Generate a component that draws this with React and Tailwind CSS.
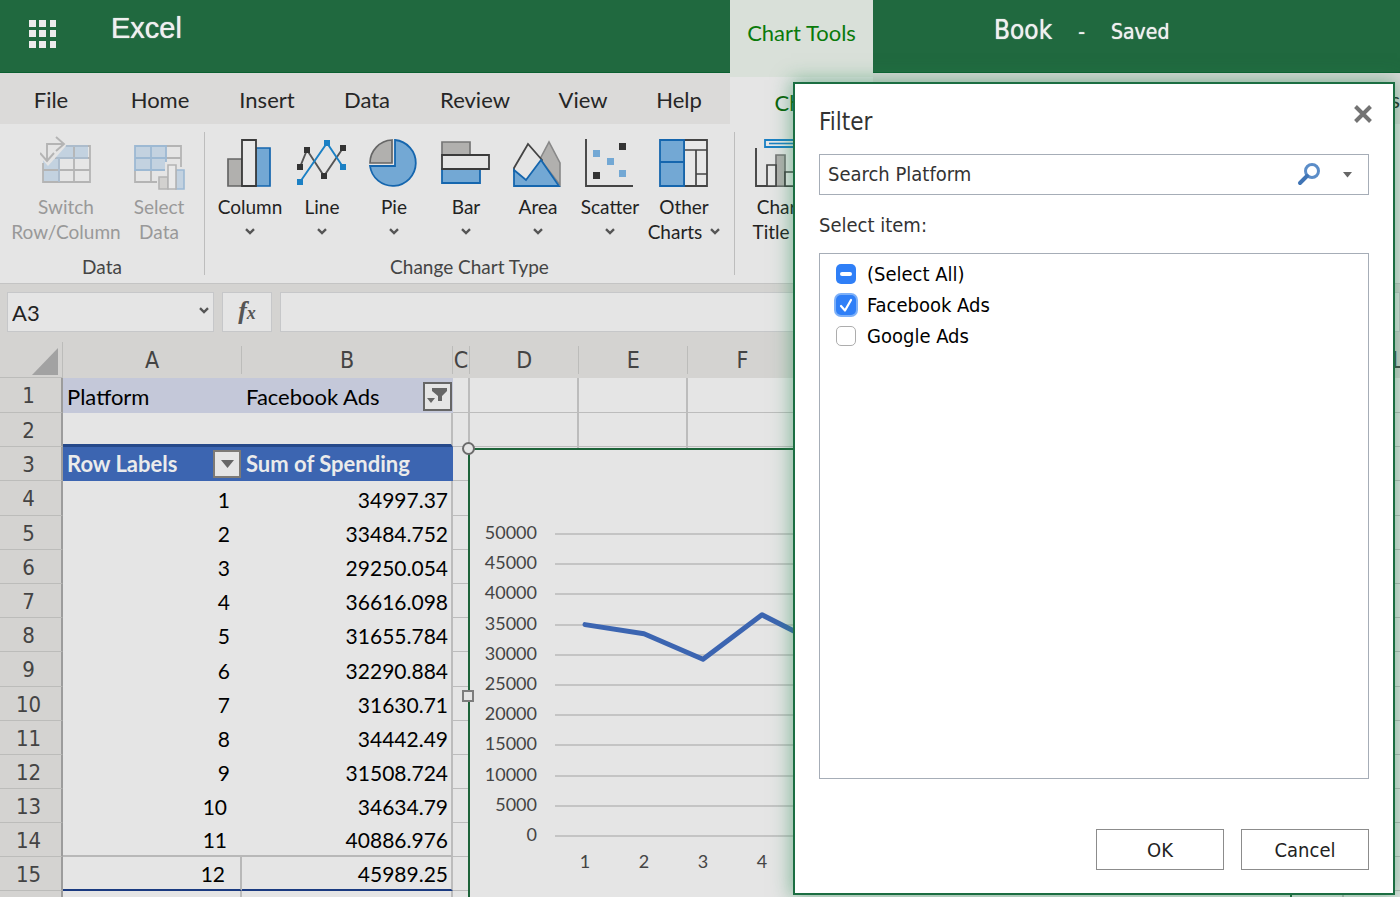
import React, { useEffect, useRef, useState } from "react";

const rows = [
  [1, 34997.37],
  [2, 33484.752],
  [3, 29250.054],
  [4, 36616.098],
  [5, 31655.784],
  [6, 32290.884],
  [7, 31630.71],
  [8, 34442.49],
  [9, 31508.724],
  [10, 34634.79],
  [11, 40886.976],
  [12, 45989.25],
];

const otherColumns = ["D", "E", "F", "G", "H", "I", "J", "K", "L"];

function Chevron({ className = "" }) {
  return (
    <svg className={className} width="10" height="7" viewBox="0 0 10 7" aria-hidden="true">
      <path d="M1 1.2 5 5 9 1.2" fill="none" stroke="#555" strokeWidth="2.4" />
    </svg>
  );
}

function Icon({ children }) {
  return (
    <svg width="52" height="54" viewBox="0 0 52 54" fill="none" className="shrink-0" aria-hidden="true">
      {children}
    </svg>
  );
}

const SwitchIcon = () => (
  <Icon>
    <path d="M21 10H48V22H9Z" fill="#c3d2e0" />
    <path d="M3 22H19V46H3Z" fill="#c3d2e0" />
    <path d="M19 22H50V46H19Z" fill="#e6e6e6" />
    <path d="M24 10H50V46H3V27M15 22H50M3 34H50M19 22V46M34 10V46" stroke="#b4b4b4" strokeWidth="1.8" />
    <path d="M22 10H48M16 22H48M19 22V46" stroke="#a9bfd3" strokeWidth="1.5" />
    <path d="M1 22 24 2 26 10 8 30Z" fill="#e5e5e5" />
    <path d="M7 24V8H23M16 1 24 8 16 15M0 17 7 25 14 17" stroke="#b4b4b4" strokeWidth="1.9" />
  </Icon>
);

const SelectIcon = () => (
  <Icon>
    <path d="M2 10H33V34H2Z" fill="#c3d2e0" />
    <path d="M33 10H48V46H2V34M33 22H48M2 34H28M18 34V46" stroke="#b4b4b4" strokeWidth="1.8" />
    <path d="M2 34V10H33V34ZM2 22H33M18 10V34" stroke="#9db9d3" strokeWidth="1.8" />
    <path d="M24 38H32V26H46V31H52V54H24Z" fill="#e5e5e5" />
    <path d="M26 41H35V53H26Z" fill="#d2d1cf" stroke="#b4b4b4" strokeWidth="1.6" />
    <path d="M43 34H51V53H43Z" fill="#c3d2e0" stroke="#9db9d3" strokeWidth="1.6" />
    <path d="M35 29H43V53H35Z" fill="#e9e9e9" stroke="#b4b4b4" strokeWidth="1.6" />
  </Icon>
);

const ColumnIcon = () => (
  <Icon>
    <path d="M4 23H18V50H4Z" fill="#b1b0ae" stroke="#666" strokeWidth="1.7" />
    <path d="M32 12H46V50H32Z" fill="#73a8d4" stroke="#1566ae" strokeWidth="1.7" />
    <path d="M18 4H32V50H18Z" fill="#e8e8e8" stroke="#3b3b3b" strokeWidth="1.8" />
  </Icon>
);

const LineIcon = () => (
  <Icon>
    <path d="M4 31 11 14 28 40 47 12" stroke="#555" strokeWidth="1.9" />
    <path d="M4 46 31 7 47 31" stroke="#1b80c4" strokeWidth="1.9" />
    <path d="M1 28h6v6h-6zM8 11h6v6h-6zM25 37h6v6h-6zM44 9h6v6h-6z" fill="#333" />
    <path d="M1 43h6v6h-6zM28 4h6v6h-6zM44 28h6v6h-6z" fill="#1b80c4" />
  </Icon>
);

const PieIcon = () => (
  <Icon>
    <path d="M24 27H2A23 23 0 0 1 24 4Z" fill="#b1b0ae" stroke="#666" strokeWidth="1.7" />
    <path d="M27 4A23 23 0 1 1 2 30H27Z" fill="#73a8d4" stroke="#1566ae" strokeWidth="1.8" />
  </Icon>
);

const BarIcon = () => (
  <Icon>
    <path d="M2 6H30V20H2Z" fill="#b1b0ae" stroke="#777" strokeWidth="1.7" />
    <path d="M2 33H40V47H2Z" fill="#73a8d4" stroke="#1566ae" strokeWidth="1.8" />
    <path d="M2 19H49V33H2Z" fill="#e5e5e5" stroke="#3b3b3b" strokeWidth="1.8" />
  </Icon>
);

const AreaIcon = () => (
  <Icon>
    <path d="M28 23 37 6 48 27V49Z" fill="#b1b0ae" stroke="#888" strokeWidth="1.6" />
    <path d="M2 32 16 8 30 24 14 45 2 35Z" fill="#e5e5e5" stroke="#444" strokeWidth="1.8" />
    <path d="M2 34 14 44 29 24 47 50H2Z" fill="#73a8d4" stroke="#1566ae" strokeWidth="1.8" />
  </Icon>
);

const ScatterIcon = () => (
  <Icon>
    <path d="M2 3V50H49" stroke="#444" strokeWidth="1.9" />
    <path d="M35 7h7v7h-7zM9 36h7v7h-7z" fill="#333" />
    <path d="M9 14h7v7h-7zM23 22h7v7h-7zM35 34h7v7h-7z" fill="#73a8d4" />
  </Icon>
);

const OtherIcon = () => (
  <Icon>
    <path d="M26 4H49V50H26Z" fill="#e8e8e8" stroke="#444" strokeWidth="1.8" />
    <path d="M26 14H49M38 14V50M38 38H49" stroke="#444" strokeWidth="1.7" />
    <path d="M2 4H26V50H2ZM2 26H26" fill="#73a8d4" stroke="#1566ae" strokeWidth="1.8" />
  </Icon>
);

const TitleIcon = () => (
  <Icon>
    <path d="M11 4H49V11H11Z" fill="#e8e8e8" stroke="#1b80c4" strokeWidth="1.8" />
    <path d="M15 7.5H45" stroke="#1b80c4" strokeWidth="1.6" />
    <path d="M2 12V50H49" stroke="#444" strokeWidth="1.9" />
    <path d="M22 19H31V50H22Z" fill="#b1b0ae" stroke="#777" strokeWidth="1.7" />
    <path d="M13 29H22V50H13ZM31 36H40V50H31Z" fill="#e8e8e8" stroke="#444" strokeWidth="1.7" />
  </Icon>
);

const chartTypes = [
  ["Column", ColumnIcon],
  ["Line", LineIcon],
  ["Pie", PieIcon],
  ["Bar", BarIcon],
  ["Area", AreaIcon],
  ["Scatter", ScatterIcon],
];

function Header() {
  return (
    <header className="relative z-10 flex h-[73px] shrink-0 items-start border-b border-[#0b5f31] bg-[#20693f] text-[#f0f0f0]">
      <div className="flex flex-1 basis-0 items-start">
        <button className="mt-5 ml-7 size-7" aria-label="App launcher">
          <svg width="28" height="28" viewBox="0 0 28 28" fill="#ececec">
            {[0, 10, 21].map((y) => [0, 10, 21].map((x) => <rect key={`${x}-${y}`} x={x + 1} y={y} width="7" height="7" />))}
          </svg>
        </button>
        <span className="mt-2 ml-[55px] font-['Liberation_Sans',sans-serif] text-[29px] leading-10 [text-shadow:0_0_1px_#f0f0f0]">Excel</span>
      </div>
      <div className="h-[77px] w-[143px] bg-[#d9e0d9] pt-[19px] text-center text-[22px] leading-7 text-[#0a7a0a]">Chart Tools</div>
      <div className="flex w-[527px] items-baseline pt-3 pl-[121px] font-['DejaVu_Sans_Condensed','DejaVu_Sans',sans-serif] leading-9 [text-shadow:0_0_1px_#f0f0f0]">
        <span className="text-[26px]">Book</span>
        <span className="ml-[26px] text-[21px]">-</span>
        <span className="ml-[26px] text-[21px]">Saved</span>
      </div>
    </header>
  );
}

function Tabs() {
  const tab = "text-center text-[22px] leading-7 text-[#262626]";
  return (
    <nav className="flex h-[51px] shrink-0 items-center bg-[#dbdad9] pt-0.5">
      <button className={`${tab} w-[102px]`}>File</button>
      <button className={`${tab} w-[116px]`}>Home</button>
      <button className={`${tab} w-[98px]`}>Insert</button>
      <button className={`${tab} w-[102px]`}>Data</button>
      <button className={`${tab} w-[114px]`}>Review</button>
      <button className={`${tab} w-[102px]`}>View</button>
      <button className={`${tab} mr-1.5 w-[90px]`}>Help</button>
      <button className="h-full w-[143px] bg-[#e5e5e5] pt-1.5 text-[22px] leading-7 text-[#0a640a]">Chart</button>
      <button className={`${tab} ml-auto`}>Comments</button>
    </nav>
  );
}

function Ribbon() {
  const item = "flex flex-col items-center text-[19px] leading-[25px]";
  return (
    <div className="flex h-[160px] shrink-0 border-b border-[#c4c4c4] bg-[#e5e5e5] pt-2 text-[#222]">
      <section className="flex h-[143px] w-[205px] shrink-0 flex-col justify-between border-r border-[#bdbdbd]">
        <div className="flex pt-1 text-[#999]">
          <button className={`${item} w-[132px]`} disabled>
            <SwitchIcon />
            <span className="pt-1">Switch</span>
            <span>Row/Column</span>
          </button>
          <button className={`${item} w-[54px]`} disabled>
            <SelectIcon />
            <span className="pt-1">Select</span>
            <span>Data</span>
          </button>
        </div>
        <h2 className="text-center text-[19px] leading-4 text-[#444]">Data</h2>
      </section>
      <section className="flex h-[143px] w-[530px] shrink-0 flex-col justify-between border-r border-[#bdbdbd]">
        <div className="flex pt-1 pl-[9px]">
          {chartTypes.map(([name, Glyph]) => (
            <button key={name} className={`${item} w-[72px]`}>
              <Glyph />
              <span className="pt-1">{name}</span>
              <span className="flex h-[25px] items-center">
                <Chevron />
              </span>
            </button>
          ))}
          <button className={`${item} w-[76px]`}>
            <OtherIcon />
            <span className="pt-1">Other</span>
            <span className="flex items-center gap-2">
              Charts <Chevron />
            </span>
          </button>
        </div>
        <h2 className="text-center text-[19px] leading-4 text-[#444]">Change Chart Type</h2>
      </section>
      <section className="flex h-[143px] flex-col">
        <div className="flex pt-1">
          <button className={`${item} w-[90px]`}>
            <TitleIcon />
            <span className="pt-1">Chart</span>
            <span className="flex items-center gap-2">
              Title <Chevron />
            </span>
          </button>
        </div>
      </section>
    </div>
  );
}

function FormulaBar() {
  return (
    <div className="flex h-[58px] shrink-0 gap-2 bg-[#d4d3d1] pt-2 pl-[7px]">
      <div className="flex h-10 w-[207px] items-center border border-[#c6c7c9] bg-[#e5e5e5] pr-1">
        <input
          aria-label="Name box"
          defaultValue="A3"
          className="w-full min-w-0 bg-transparent px-1 font-['Lato',sans-serif] text-[22px] text-[#222] outline-none"
        />
        <Chevron className="mb-1 shrink-0" />
      </div>
      <button aria-label="Insert function" className="h-10 w-[50px] border border-[#c6c7c9] bg-[#e5e5e5] font-['Liberation_Serif',serif] text-[26px] leading-8 font-bold text-[#555] italic">
        f<span className="text-[18px]">x</span>
      </button>
      <input aria-label="Formula" className="h-10 min-w-0 flex-1 border border-[#c6c7c9] bg-[#e5e5e5] px-2 text-[22px] outline-none" />
    </div>
  );
}

function ColHead({ children }) {
  return (
    <th className="p-0 align-top font-normal">
      <div className="mt-1 flex h-7 items-center justify-center border-r border-[#bcbcba]">{children}</div>
    </th>
  );
}

function OtherCells() {
  const cell = "border-r-2 border-b border-[#bcbcbc] p-0";
  return (
    <>
      <td className={cell} />
      {otherColumns.map((c) => (
        <td key={c} className={cell} />
      ))}
    </>
  );
}

function RowHead({ children }) {
  return (
    <th
      scope="row"
      className="border-r-2 border-b border-r-[#9c9c9c] border-b-[#bcbcba] bg-[#d4d3d1] p-0 pt-0.5 pr-1 font-['DejaVu_Sans_Condensed','DejaVu_Sans',sans-serif] text-[22px] leading-7 font-normal text-[#444]"
    >
      {children}
    </th>
  );
}

function Sheet() {
  const text = "p-0 pt-0.5 pl-1 text-left text-[22px] leading-7 text-black";
  const head = "bg-[#3c65b1] p-0 pl-1 text-left text-[22px] leading-7 font-bold text-[#ebebeb]";
  const number = "p-0 pt-0.5 text-right text-[21px] leading-7 text-black";
  return (
    <table className="w-[1453px] table-fixed border-separate border-spacing-0">
      <colgroup>
        <col className="w-[63px]" />
        <col className="w-[179px]" />
        <col className="w-[211px]" />
        <col className="w-[17px]" />
        {otherColumns.map((c) => (
          <col key={c} />
        ))}
      </colgroup>
      <thead>
        <tr className="h-[36px] bg-[#d4d3d1] font-['DejaVu_Sans_Condensed','DejaVu_Sans',sans-serif] text-[23px] leading-7 text-[#444]">
          <th className="border-r border-b border-[#bcbcba] p-0">
            <button className="flex w-full justify-end pt-1 pr-1" aria-label="Select all cells">
              <svg width="26" height="27" viewBox="0 0 26 27">
                <path d="M26 0V27H0Z" fill="#a2a2a2" />
              </svg>
            </button>
          </th>
          <ColHead>A</ColHead>
          <ColHead>B</ColHead>
          <ColHead>C</ColHead>
          {otherColumns.map((c) => (
            <ColHead key={c}>{c}</ColHead>
          ))}
        </tr>
      </thead>
      <tbody>
        <tr className="h-[35px]">
          <RowHead>1</RowHead>
          <td className={`${text} bg-[#c4c8d9]`}>Platform</td>
          <td className={`${text} bg-[#c4c8d9]`}>
            <div className="flex items-center justify-between">
              Facebook Ads
              <button aria-label="Filter Platform" className="mr-px flex size-[29px] items-center justify-center border-2 border-[#666] bg-[#e5e5e5]">
                <svg width="21" height="19" viewBox="0 0 21 19" fill="#666">
                  <path d="M5 1H20V4L15 9V14H11V9L5 4ZM0 11H8L4 16Z" />
                </svg>
              </button>
            </div>
          </td>
          <OtherCells />
        </tr>
        <tr className="h-[34px]">
          <RowHead>2</RowHead>
          <td className="border-b-3 border-[#26498a] p-0" />
          <td className="border-r-2 border-b-3 border-r-[#bcbcbc] border-b-[#26498a] p-0" />
          <OtherCells />
        </tr>
        <tr className="h-[34px]">
          <RowHead>3</RowHead>
          <td className={head}>
            <div className="flex items-center justify-between">
              Row Labels
              <button aria-label="Filter row labels" className="mr-px flex size-[28px] items-center justify-center border-2 border-[#7d7a76] bg-[#e5e5e5]">
                <svg width="13" height="8" viewBox="0 0 13 8" fill="#666">
                  <path d="M0 0H13L6.5 8Z" />
                </svg>
              </button>
            </div>
          </td>
          <td className={head}>Sum of Spending</td>
          <OtherCells />
        </tr>
        {rows.map(([month, value]) => (
          <tr key={month} className={month % 5 === 1 && month < 11 ? "h-[35px]" : "h-[34px]"}>
            <RowHead>{month + 3}</RowHead>
            <td
              className={`${number} ${month > 9 ? "pr-[15px]" : "pr-3"} ${
                month === 11 ? "border-b-2 border-[#b8b8b8]" : month === 12 ? "border-r-2 border-b-2 border-r-[#b8b8b8] border-b-[#1a3a80]" : ""
              }`}
            >
              {month}
            </td>
            <td
              className={`${number} border-r-2 border-r-[#bcbcbc] pr-[3px] ${
                month === 11 ? "border-b-2 border-b-[#b8b8b8]" : month === 12 ? "border-b-2 border-b-[#1a3a80]" : ""
              }`}
            >
              {value}
            </td>
            <OtherCells />
          </tr>
        ))}
        <tr className="h-[34px]">
          <RowHead />
          <td className="border-r-2 border-[#bcbcbc] p-0" />
          <td className="border-r-2 border-[#bcbcbc] p-0" />
          <OtherCells />
        </tr>
      </tbody>
    </table>
  );
}

function SpendingChart() {
  const base = 386;
  const yOf = (v) => base - (v / 50000) * 302;
  const xOf = (i) => 115 + i * 59;
  const ticks = Array.from({ length: 11 }, (_, i) => i * 5000);
  return (
    <figure className="absolute top-[106px] left-[468px] h-[520px] w-[824px] border-2 border-[#1d6339] bg-[#e5e5e5]" aria-label="Sum of Spending by month">
      <svg width="820" height="516" viewBox="0 0 820 516" className="font-['Lato',sans-serif] text-[18px]" fill="#444">
        {ticks.map((t) => (
          <g key={t}>
            <path d={`M85 ${Math.round(yOf(t))}H790`} stroke="#b9b9b9" strokeWidth="1.5" />
            <text x="67" y={Math.round(yOf(t)) + 5} textAnchor="end">
              {t}
            </text>
          </g>
        ))}
        {rows.map(([m], i) => (
          <text key={m} x={xOf(i)} y="418" textAnchor="middle">
            {m}
          </text>
        ))}
        <polyline points={rows.map(([, v], i) => `${xOf(i)},${yOf(v)}`).join(" ")} fill="none" stroke="#3c65b1" strokeWidth="5" strokeLinecap="round" strokeLinejoin="round" />
      </svg>
      <span className="absolute -top-2 -left-2 size-[13px] rounded-full border-2 border-[#6b6b6b] bg-[#e5e5e5]" />
      <span className="absolute top-[240px] -left-2 size-3 border-2 border-[#7d7d7d] bg-[#e5e5e5]" />
    </figure>
  );
}

function CheckRow({ label, state, focused }) {
  const ref = useRef(null);
  const [checked, setChecked] = useState(state === "checked");
  const mixed = state === "mixed";
  useEffect(() => {
    ref.current.indeterminate = mixed;
  }, [mixed]);
  return (
    <label className="flex h-[31px] items-center gap-[11px] text-[20px] text-black">
      <span className="grid size-5">
        <input
          ref={ref}
          type="checkbox"
          checked={checked}
          onChange={() => setChecked(!checked)}
          className={`col-start-1 row-start-1 size-5 appearance-none rounded-[5px] ${
            mixed || checked ? "bg-[#2f7ff7]" : "border border-[#adadad] bg-white"
          } ${focused ? "ring-2 ring-[#7db0f8]" : ""}`}
        />
        {mixed && <span className="pointer-events-none col-start-1 row-start-1 h-1 w-3 place-self-center rounded-full bg-white" />}
        {checked && (
          <svg className="pointer-events-none col-start-1 row-start-1" width="20" height="20" viewBox="0 0 20 20">
            <path d="M5 11 9 15.5 15 5" fill="none" stroke="#fff" strokeWidth="2.2" strokeLinecap="round" strokeLinejoin="round" />
          </svg>
        )}
      </span>
      {label}
    </label>
  );
}

function FilterDialog() {
  return (
    <div
      role="dialog"
      aria-labelledby="filter-title"
      className="absolute top-[82px] right-[5px] bottom-0.5 z-20 flex w-[602px] flex-col border-2 border-[#1b6e42] bg-white px-6 pt-5 pb-[23px] font-['DejaVu_Sans_Condensed','DejaVu_Sans',sans-serif] text-[#333] shadow-[0_0_18px_2px_rgba(33,140,80,0.5)]"
    >
      <div className="flex justify-between">
        <h1 id="filter-title" className="text-[24px] leading-9">
          Filter
        </h1>
        <button aria-label="Close" className="-mr-1 flex h-5 w-5 items-center justify-center">
          <svg width="20" height="20" viewBox="0 0 20 20">
            <path d="M2.5 2.5 17.5 17.5M17.5 2.5 2.5 17.5" stroke="#737373" strokeWidth="4" />
          </svg>
        </button>
      </div>
      <div className="mt-3.5 flex h-[41px] shrink-0 items-center border border-[#a6adb7] pr-4 pb-0.5">
        <input
          aria-label="Search Platform"
          placeholder="Search Platform"
          className="min-w-0 flex-1 bg-transparent px-2 text-[20px] outline-none placeholder:text-[#333]"
        />
        <button aria-label="Search" className="mr-[22px]">
          <svg width="24" height="24" viewBox="0 0 24 24" fill="none">
            <circle cx="15" cy="9" r="6.5" stroke="#5b8dc8" strokeWidth="3" />
            <path d="M10 14 3 21" stroke="#3f74b5" strokeWidth="4" strokeLinecap="round" />
          </svg>
        </button>
        <button aria-label="Search options" className="flex w-[9px] justify-center pt-0.5">
          <svg width="9" height="6" viewBox="0 0 9 6">
            <path d="M0 0H9L4.5 5.5Z" fill="#666" />
          </svg>
        </button>
      </div>
      <p className="mt-4 text-[20px] leading-7">Select item:</p>
      <div className="mt-3.5 flex h-[526px] flex-col border border-[#a6adb7] pt-1 pl-4">
        <CheckRow label="(Select All)" state="mixed" />
        <CheckRow label="Facebook Ads" state="checked" focused />
        <CheckRow label="Google Ads" state="unchecked" />
      </div>
      <div className="mt-auto flex justify-end gap-[17px] text-[20px] text-[#222]">
        <button className="h-[41px] w-32 border border-[#8c8c8c]">OK</button>
        <button className="h-[41px] w-32 border border-[#8c8c8c]">Cancel</button>
      </div>
    </div>
  );
}

export default function App() {
  return (
    <div className="relative flex h-screen flex-col overflow-hidden bg-[#e5e5e5] font-['Lato',sans-serif]">
      <Header />
      <Tabs />
      <Ribbon />
      <FormulaBar />
      <main className="relative min-h-0 flex-1 overflow-hidden">
        <Sheet />
        <SpendingChart />
      </main>
      <FilterDialog />
    </div>
  );
}
